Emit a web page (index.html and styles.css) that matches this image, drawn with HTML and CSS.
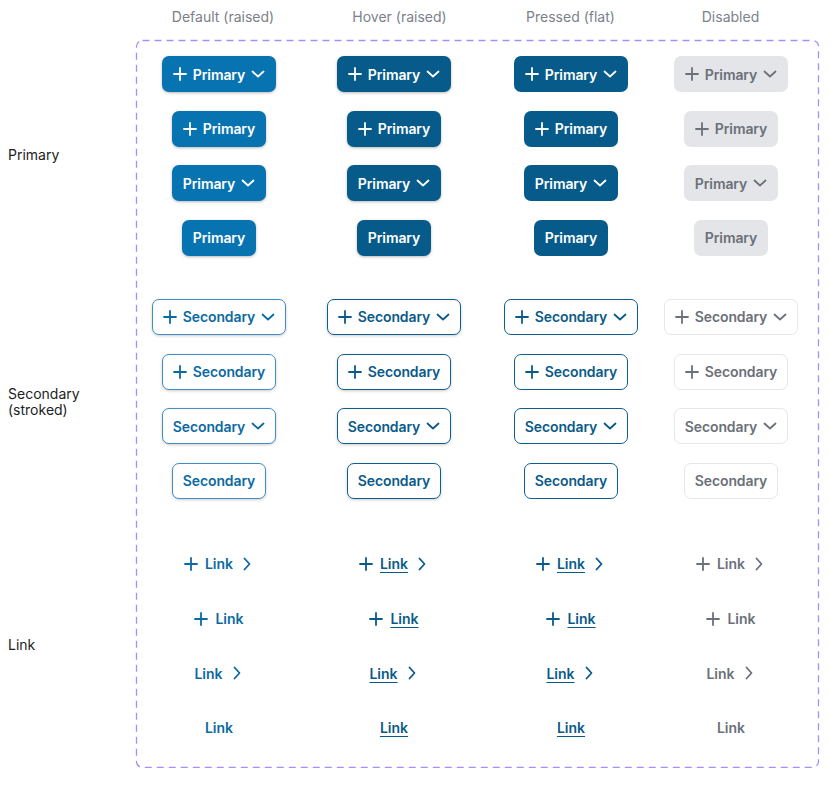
FILE: index.html
```html
<!DOCTYPE html>
<html>
<head>
<meta charset="utf-8">
<link rel="stylesheet" href="styles.css">
</head>
<body>
<div class="sheet">
  <div class="heads">
    <div class="head">Default (raised)</div>
    <div class="head">Hover (raised)</div>
    <div class="head">Pressed (flat)</div>
    <div class="head">Disabled</div>
  </div>

  <div class="frame"><svg class="frame-svg"><rect rx="6" ry="6"/></svg></div>

  <div class="label l1">Primary</div>
  <div class="group g1">
    <span class="btn primary st-default"><svg class="ic" viewBox="0 0 14 14"><path d="M7 1v12M1 7h12"/></svg>Primary<svg class="ic" viewBox="0 0 14 14"><path d="M1.5 4.5l5.5 5 5.5-5"/></svg></span>
    <span class="btn primary st-hover"><svg class="ic" viewBox="0 0 14 14"><path d="M7 1v12M1 7h12"/></svg>Primary<svg class="ic" viewBox="0 0 14 14"><path d="M1.5 4.5l5.5 5 5.5-5"/></svg></span>
    <span class="btn primary st-pressed"><svg class="ic" viewBox="0 0 14 14"><path d="M7 1v12M1 7h12"/></svg>Primary<svg class="ic" viewBox="0 0 14 14"><path d="M1.5 4.5l5.5 5 5.5-5"/></svg></span>
    <span class="btn primary st-disabled"><svg class="ic" viewBox="0 0 14 14"><path d="M7 1v12M1 7h12"/></svg>Primary<svg class="ic" viewBox="0 0 14 14"><path d="M1.5 4.5l5.5 5 5.5-5"/></svg></span>

    <span class="btn primary st-default"><svg class="ic" viewBox="0 0 14 14"><path d="M7 1v12M1 7h12"/></svg>Primary</span>
    <span class="btn primary st-hover"><svg class="ic" viewBox="0 0 14 14"><path d="M7 1v12M1 7h12"/></svg>Primary</span>
    <span class="btn primary st-pressed"><svg class="ic" viewBox="0 0 14 14"><path d="M7 1v12M1 7h12"/></svg>Primary</span>
    <span class="btn primary st-disabled"><svg class="ic" viewBox="0 0 14 14"><path d="M7 1v12M1 7h12"/></svg>Primary</span>

    <span class="btn primary st-default">Primary<svg class="ic" viewBox="0 0 14 14"><path d="M1.5 4.5l5.5 5 5.5-5"/></svg></span>
    <span class="btn primary st-hover">Primary<svg class="ic" viewBox="0 0 14 14"><path d="M1.5 4.5l5.5 5 5.5-5"/></svg></span>
    <span class="btn primary st-pressed">Primary<svg class="ic" viewBox="0 0 14 14"><path d="M1.5 4.5l5.5 5 5.5-5"/></svg></span>
    <span class="btn primary st-disabled">Primary<svg class="ic" viewBox="0 0 14 14"><path d="M1.5 4.5l5.5 5 5.5-5"/></svg></span>

    <span class="btn primary st-default">Primary</span>
    <span class="btn primary st-hover">Primary</span>
    <span class="btn primary st-pressed">Primary</span>
    <span class="btn primary st-disabled">Primary</span>
  </div>

  <div class="label l2">Secondary<br>(stroked)</div>
  <div class="group g2">
    <span class="btn secondary st-default"><svg class="ic" viewBox="0 0 14 14"><path d="M7 1v12M1 7h12"/></svg>Secondary<svg class="ic" viewBox="0 0 14 14"><path d="M1.5 4.5l5.5 5 5.5-5"/></svg></span>
    <span class="btn secondary st-hover"><svg class="ic" viewBox="0 0 14 14"><path d="M7 1v12M1 7h12"/></svg>Secondary<svg class="ic" viewBox="0 0 14 14"><path d="M1.5 4.5l5.5 5 5.5-5"/></svg></span>
    <span class="btn secondary st-pressed"><svg class="ic" viewBox="0 0 14 14"><path d="M7 1v12M1 7h12"/></svg>Secondary<svg class="ic" viewBox="0 0 14 14"><path d="M1.5 4.5l5.5 5 5.5-5"/></svg></span>
    <span class="btn secondary st-disabled"><svg class="ic" viewBox="0 0 14 14"><path d="M7 1v12M1 7h12"/></svg>Secondary<svg class="ic" viewBox="0 0 14 14"><path d="M1.5 4.5l5.5 5 5.5-5"/></svg></span>

    <span class="btn secondary st-default"><svg class="ic" viewBox="0 0 14 14"><path d="M7 1v12M1 7h12"/></svg>Secondary</span>
    <span class="btn secondary st-hover"><svg class="ic" viewBox="0 0 14 14"><path d="M7 1v12M1 7h12"/></svg>Secondary</span>
    <span class="btn secondary st-pressed"><svg class="ic" viewBox="0 0 14 14"><path d="M7 1v12M1 7h12"/></svg>Secondary</span>
    <span class="btn secondary st-disabled"><svg class="ic" viewBox="0 0 14 14"><path d="M7 1v12M1 7h12"/></svg>Secondary</span>

    <span class="btn secondary st-default">Secondary<svg class="ic" viewBox="0 0 14 14"><path d="M1.5 4.5l5.5 5 5.5-5"/></svg></span>
    <span class="btn secondary st-hover">Secondary<svg class="ic" viewBox="0 0 14 14"><path d="M1.5 4.5l5.5 5 5.5-5"/></svg></span>
    <span class="btn secondary st-pressed">Secondary<svg class="ic" viewBox="0 0 14 14"><path d="M1.5 4.5l5.5 5 5.5-5"/></svg></span>
    <span class="btn secondary st-disabled">Secondary<svg class="ic" viewBox="0 0 14 14"><path d="M1.5 4.5l5.5 5 5.5-5"/></svg></span>

    <span class="btn secondary st-default">Secondary</span>
    <span class="btn secondary st-hover">Secondary</span>
    <span class="btn secondary st-pressed">Secondary</span>
    <span class="btn secondary st-disabled">Secondary</span>
  </div>

  <div class="label l3">Link</div>
  <div class="group g3">
    <span class="link st-default"><svg class="ic" viewBox="0 0 14 14"><path d="M7 1v12M1 7h12"/></svg><span class="lt">Link</span><svg class="ic chev" viewBox="0 0 14 14"><path d="M4.5 1.5l5 5.5-5 5.5"/></svg></span>
    <span class="link st-hover"><svg class="ic" viewBox="0 0 14 14"><path d="M7 1v12M1 7h12"/></svg><span class="lt">Link</span><svg class="ic chev" viewBox="0 0 14 14"><path d="M4.5 1.5l5 5.5-5 5.5"/></svg></span>
    <span class="link st-pressed"><svg class="ic" viewBox="0 0 14 14"><path d="M7 1v12M1 7h12"/></svg><span class="lt">Link</span><svg class="ic chev" viewBox="0 0 14 14"><path d="M4.5 1.5l5 5.5-5 5.5"/></svg></span>
    <span class="link st-disabled"><svg class="ic" viewBox="0 0 14 14"><path d="M7 1v12M1 7h12"/></svg><span class="lt">Link</span><svg class="ic chev" viewBox="0 0 14 14"><path d="M4.5 1.5l5 5.5-5 5.5"/></svg></span>

    <span class="link st-default"><svg class="ic" viewBox="0 0 14 14"><path d="M7 1v12M1 7h12"/></svg><span class="lt">Link</span></span>
    <span class="link st-hover"><svg class="ic" viewBox="0 0 14 14"><path d="M7 1v12M1 7h12"/></svg><span class="lt">Link</span></span>
    <span class="link st-pressed"><svg class="ic" viewBox="0 0 14 14"><path d="M7 1v12M1 7h12"/></svg><span class="lt">Link</span></span>
    <span class="link st-disabled"><svg class="ic" viewBox="0 0 14 14"><path d="M7 1v12M1 7h12"/></svg><span class="lt">Link</span></span>

    <span class="link st-default"><span class="lt">Link</span><svg class="ic chev" viewBox="0 0 14 14"><path d="M4.5 1.5l5 5.5-5 5.5"/></svg></span>
    <span class="link st-hover"><span class="lt">Link</span><svg class="ic chev" viewBox="0 0 14 14"><path d="M4.5 1.5l5 5.5-5 5.5"/></svg></span>
    <span class="link st-pressed"><span class="lt">Link</span><svg class="ic chev" viewBox="0 0 14 14"><path d="M4.5 1.5l5 5.5-5 5.5"/></svg></span>
    <span class="link st-disabled"><span class="lt">Link</span><svg class="ic chev" viewBox="0 0 14 14"><path d="M4.5 1.5l5 5.5-5 5.5"/></svg></span>

    <span class="link st-default"><span class="lt">Link</span></span>
    <span class="link st-hover"><span class="lt">Link</span></span>
    <span class="link st-pressed"><span class="lt">Link</span></span>
    <span class="link st-disabled"><span class="lt">Link</span></span>
  </div>
</div>
</body>
</html>
```

FILE: styles.css
```css
* { box-sizing: border-box; }
html, body { margin: 0; padding: 0; background: #ffffff; }
body {
  font-family: Inter, "Noto Sans", sans-serif;
  color: #1d2025;
  width: 835px;
  height: 786px;
  overflow: hidden;
}

.sheet {
  display: grid;
  grid-template-columns: 136px 683px;
  grid-template-rows: 40px 16px auto 43px auto 47px auto 22px;
}

.heads {
  grid-column: 2;
  grid-row: 1;
  display: grid;
  grid-template-columns: 174px 179px 163px 157px;
  padding-top: 7px;
}
.head {
  text-align: center;
  font-size: 14px;
  line-height: 20px;
  color: #7b818a;
}

.frame {
  grid-column: 2;
  grid-row: 2 / 9;
  position: relative;
}
.frame-svg {
  display: block;
  width: 100%;
  height: 100%;
  overflow: visible;
}
.frame-svg rect {
  x: 0.5px;
  y: 0.5px;
  width: calc(100% - 1px);
  height: calc(100% - 1px);
  fill: none;
  stroke: #a98ef6;
  stroke-width: 1.3;
  stroke-dasharray: 7 5;
}

.label {
  grid-column: 1;
  align-self: center;
  padding-left: 8px;
  font-size: 14px;
  line-height: 16px;
  color: #1b1e23;
}
.l1 { grid-row: 3; padding-bottom: 2px; }
.l2 { grid-row: 5; padding-top: 6px; }
.l3 { grid-row: 7; padding-bottom: 2px; }

.group {
  grid-column: 2;
  display: grid;
  grid-template-columns: 166px 184px 170px 150px;
  grid-auto-rows: 36px;
  row-gap: 18.67px;
  align-items: center;
  justify-items: center;
}
.g1 { grid-row: 3; }
.g2 { grid-row: 5; }
.g3 { grid-row: 7; }

.ic {
  width: 14px;
  height: 14px;
  flex: none;
  fill: none;
  stroke: currentColor;
  stroke-width: 1.8;
  stroke-linecap: round;
  stroke-linejoin: round;
}

.btn {
  display: inline-flex;
  align-items: center;
  gap: 6px;
  height: 36px;
  padding: 0 11px;
  border-radius: 7px;
  font-size: 14px;
  font-weight: 600;
  letter-spacing: -0.1px;
  white-space: nowrap;
}

.primary.st-default {
  background: #0774b1;
  color: #ffffff;
  box-shadow: 0 1px 3px rgba(0, 0, 0, 0.28);
}
.primary.st-hover {
  background: #065b8a;
  color: #ffffff;
  box-shadow: 0 1px 3px rgba(0, 0, 0, 0.28);
}
.primary.st-pressed {
  background: #065b8a;
  color: #ffffff;
}
.primary.st-disabled {
  background: #e4e5e8;
  color: #6b7079;
}

.secondary { background: #ffffff; border: 1px solid; padding: 0 10px; }
.secondary.st-default {
  border-color: #3f8fc4;
  color: #0b6aa2;
  box-shadow: 0 1px 3px rgba(0, 0, 0, 0.2);
}
.secondary.st-hover {
  border-color: #0d5f8f;
  color: #0a5a89;
  box-shadow: 0 1px 3px rgba(0, 0, 0, 0.2);
}
.secondary.st-pressed {
  border-color: #0d5f8f;
  color: #0a5a89;
}
.secondary.st-disabled {
  border-color: #e4e6e9;
  color: #6b7079;
}

.link {
  display: inline-flex;
  align-items: center;
  gap: 7px;
  font-size: 14px;
  font-weight: 600;
}
.link.st-default { color: #0b6aa2; }
.link.st-hover, .link.st-pressed { color: #0a5a89; }
.link.st-hover .lt, .link.st-pressed .lt {
  text-decoration: underline;
  text-underline-offset: 3px;
  text-decoration-thickness: 1px;
}
.link.st-disabled { color: #6b7079; }
```
